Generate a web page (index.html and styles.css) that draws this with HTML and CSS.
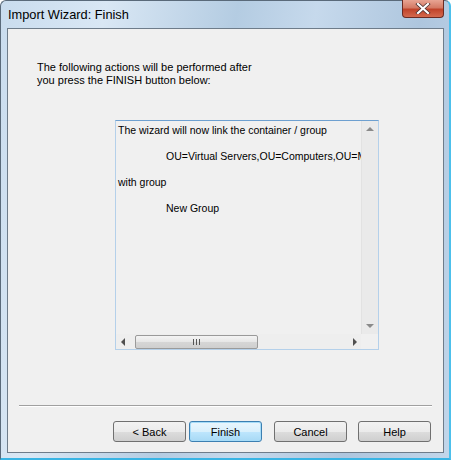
FILE: index.html
```html
<!DOCTYPE html>
<html lang="en">
<head>
    <meta charset="UTF-8">
    <title>Import Wizard: Finish</title>
    <link rel="stylesheet" href="styles.css">
</head>
<body>
    <div class="window">
        <div class="titlebar">
            <span class="title">Import Wizard: Finish</span>
            <div class="close-btn">
                <svg width="16" height="11" viewBox="0 0 16 11">
                    <path d="M3 1 L13 10 M13 1 L3 10" stroke="#4a3030" stroke-width="3.6" stroke-linecap="square"/>
                    <path d="M3 1 L13 10 M13 1 L3 10" stroke="#fff" stroke-width="2.2" stroke-linecap="square"/>
                </svg>
            </div>
        </div>
        <div class="client">
            <p class="intro">The following actions will be performed after<br>you press the FINISH button below:</p>
            <div class="textbox">
                <div class="text-area">
                    <div class="text-content">
                        <div class="line">The wizard will now link the container / group</div>
                        <div class="line indent">OU=Virtual Servers,OU=Computers,OU=Mgmt</div>
                        <div class="line">with group</div>
                        <div class="line indent">New Group</div>
                    </div>
                    <div class="vscroll">
                        <div class="arrow up"></div>
                        <div class="arrow down"></div>
                    </div>
                </div>
                <div class="hscroll-row">
                    <div class="hscroll">
                        <div class="arrow left"></div>
                        <div class="thumb"><span class="grip"></span></div>
                        <div class="arrow right"></div>
                    </div>
                    <div class="corner"></div>
                </div>
            </div>
            <div class="separator"></div>
            <div class="buttons">
                <button class="btn">&lt; Back</button>
                <button class="btn default">Finish</button>
                <button class="btn gap">Cancel</button>
                <button class="btn gap">Help</button>
            </div>
        </div>
    </div>
</body>
</html>
```

FILE: styles.css
```css
html, body {
    margin: 0;
    padding: 0;
    background: #fff;
}
body {
    font-family: "Liberation Sans", Arial, sans-serif;
    font-size: 11px;
    color: #000;
}
.window {
    width: 451px;
    height: 460px;
    box-sizing: border-box;
    border: 1px solid #5a6a7a;
    border-bottom: 2px solid #38b4e4;
    border-right: 2px solid #4cc0ec;
    border-radius: 6px 6px 0 0;
    background: linear-gradient(100deg, #c9dcee 0%, #d9e7f4 20%, #b4cce2 45%, #c6d9ec 60%, #aec6de 80%, #c2d6ea 100%);
    padding: 0 5px 5px 6px;
    display: flex;
    flex-direction: column;
}
.titlebar {
    height: 27px;
    display: flex;
    justify-content: space-between;
    align-items: flex-start;
}
.title {
    font-size: 12.8px;
    color: #000;
    margin-top: 6px;
    margin-left: 1px;
}
.close-btn {
    width: 42px;
    height: 18px;
    margin-top: -1px;
    box-sizing: border-box;
    border: 1px solid #6b2a22;
    border-top: none;
    border-radius: 0 0 4px 4px;
    background: linear-gradient(#e8a493 0%, #d47a65 45%, #c0432a 55%, #d4694e 100%);
    display: flex;
    align-items: center;
    justify-content: center;
}
.client {
    flex: 1;
    background: #f0f0f0;
    border: 1px solid #6e7c8a;
    display: flex;
    flex-direction: column;
}
.intro {
    margin: 32px 0 0 29px;
    line-height: 13px;
}
.textbox {
    margin: 33px 0 0 107px;
    width: 264px;
    height: 230px;
    box-sizing: border-box;
    border: 1px solid #b4d0ea;
    border-top-color: #6ea0d0;
    display: flex;
    flex-direction: column;
}
.text-area {
    flex: 1;
    display: flex;
}
.text-content {
    flex: 1;
    overflow: hidden;
    white-space: nowrap;
    padding: 3px 0 0 2px;
    font-size: 10.5px;
}
.line {
    height: 13px;
    line-height: 13px;
    margin-bottom: 13px;
}
.indent {
    padding-left: 48px;
}
.vscroll {
    width: 16px;
    background: #eaeaea;
    border-left: 1px solid #e2e2e2;
    display: flex;
    flex-direction: column;
    justify-content: space-between;
    align-items: center;
    padding: 6px 0 6px;
}
.arrow {
    width: 0;
    height: 0;
}
.up {
    border-left: 4px solid transparent;
    border-right: 4px solid transparent;
    border-bottom: 4px solid #8a8a8a;
}
.down {
    border-left: 4px solid transparent;
    border-right: 4px solid transparent;
    border-top: 4px solid #8a8a8a;
}
.hscroll-row {
    height: 15px;
    display: flex;
}
.hscroll {
    flex: 1;
    background: #eeeeee;
    display: flex;
    align-items: center;
    padding: 0 4px 0 5px;
}
.left {
    border-top: 4px solid transparent;
    border-bottom: 4px solid transparent;
    border-right: 4px solid #505050;
}
.right {
    border-top: 4px solid transparent;
    border-bottom: 4px solid transparent;
    border-left: 4px solid #505050;
    margin-left: auto;
}
.thumb {
    width: 123px;
    height: 14px;
    margin-left: 10px;
    box-sizing: border-box;
    border: 1px solid #9a9a9a;
    border-radius: 2px;
    background: linear-gradient(#f4f4f4 0%, #e6e6e6 50%, #d6d6d6 51%, #cfcfcf 100%);
    display: flex;
    align-items: center;
    justify-content: center;
}
.grip {
    width: 5px;
    height: 6px;
    border-left: 1px solid #555;
    border-right: 1px solid #555;
    background: linear-gradient(90deg, transparent 2px, #555 2px, #555 3px, transparent 3px);
}
.corner {
    width: 17px;
    background: #f0f0f0;
}
.separator {
    margin: 55px 11px 0 11px;
    border-top: 1px solid #a0a0a0;
    border-bottom: 1px solid #fff;
}
.buttons {
    display: flex;
    margin: 14px 0 0 105px;
}
.btn {
    width: 73px;
    height: 21px;
    margin-right: 3px;
    font-family: "Liberation Sans", Arial, sans-serif;
    font-size: 11px;
    color: #000;
    border: 1px solid #707070;
    border-radius: 3px;
    background: linear-gradient(#f2f2f2 0%, #ebebeb 50%, #dddddd 51%, #cfcfcf 100%);
    padding: 0;
}
.default {
    border-color: #3c7fb1;
    background: linear-gradient(#eaf6fd 0%, #d9f0fc 50%, #bee6fd 51%, #a7d9f5 100%);
    box-shadow: inset 0 0 0 1px #a6dcf8;
}
.gap {
    margin-left: 9px;
    margin-right: 2px;
}
```
